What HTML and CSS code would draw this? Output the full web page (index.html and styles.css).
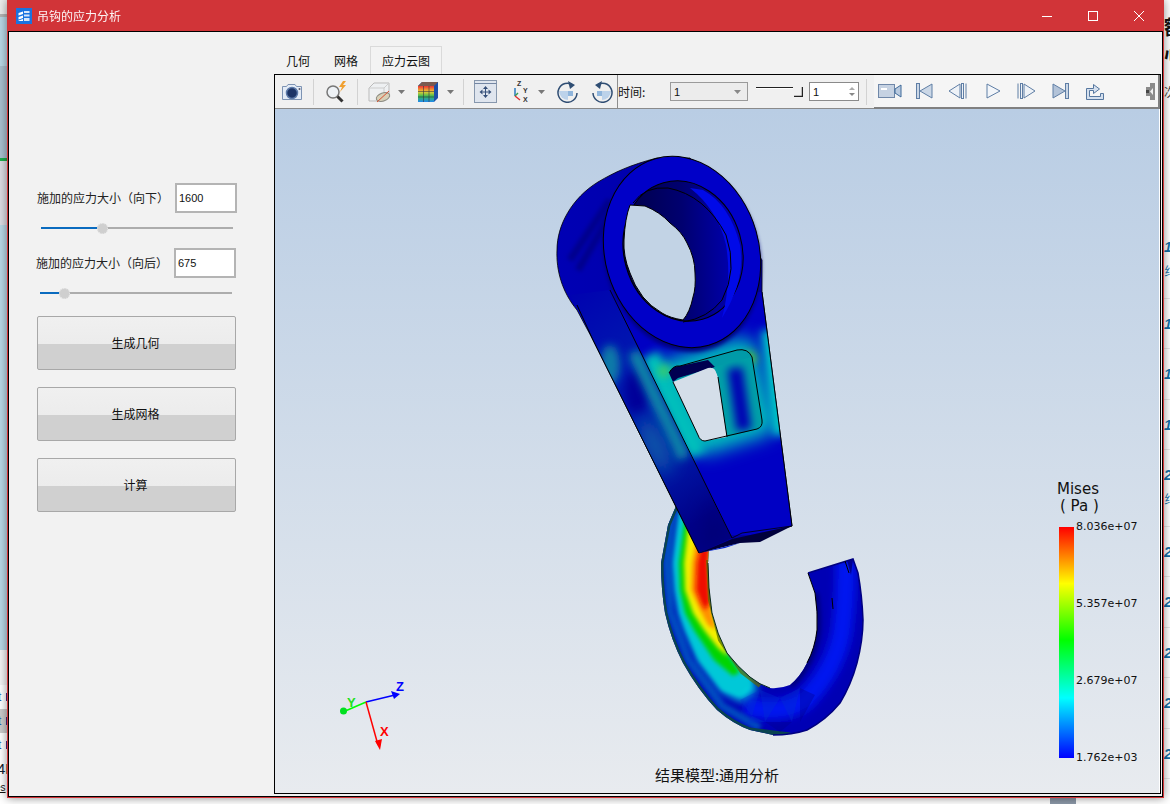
FILE: index.html
```html
<!DOCTYPE html>
<html lang="zh">
<head>
<meta charset="utf-8">
<title>吊钩的应力分析</title>
<link rel="stylesheet" href="styles.css">
</head>
<body>
<div class="desktop">
  <div class="desk-left">
    <div class="dl a"></div><div class="dl b"></div><div class="dl c"></div><div class="dl d"></div><div class="dl e"></div><div class="dl f"></div><div class="dl g"></div><div class="dl h"></div>
    <div class="dl-list"><span>t</span><span class="sel">t</span><span>t</span><span class="big">4F</span><span class="und">es</span></div>
  </div>
  <div class="desk-right">
    <div class="dr-head"><span>额</span><span>心</span><span class="small">次</span></div>
    <div class="dr-row tall">1<i>纟</i></div><div class="dr-row">1</div><div class="dr-row">1</div><div class="dr-row">1</div>
    <div class="dr-row tall">2<i>纟</i></div><div class="dr-row">2</div><div class="dr-row">2</div><div class="dr-row">2</div><div class="dr-row">2</div><div class="dr-row">2</div>
  </div>
  <div class="desk-bottom"></div>

  <div class="window">
    <header class="titlebar">
      <svg class="app-icon" width="16" height="16" viewBox="0 0 16 16"><rect width="16" height="16" fill="#1a73e0"/><path d="M2.500 5 7 3.500v2.500L2.500 7.500zM2.500 9 7 7.500V10l-4.500 1.500zM2.500 12.500 7 11v2H2.500z" fill="#fff"/><path d="M8 3h5.500v2H8zM8 6.500h5.500v2H8zM8 10h5.500v3H8z" fill="#d6e6fa"/></svg>
      <span class="app-title">吊钩的应力分析</span>
      <div class="win-controls">
        <svg width="12" height="12" viewBox="0 0 12 12"><path d="M1 6.500h10" stroke="#fff"/></svg>
        <svg class="max" width="12" height="12" viewBox="0 0 12 12"><rect x="1.500" y="1.500" width="9" height="9" fill="none" stroke="#fff"/></svg>
        <svg class="close" width="12" height="12" viewBox="0 0 12 12"><path d="M1 1l10 10M11 1 1 11" stroke="#fff"/></svg>
      </div>
    </header>
    <div class="client">
      <aside class="side">
        <div class="field"><span class="field-label">施加的应力大小（向下）</span><div class="num-box">1600</div></div>
        <div class="slider"><div class="slider-fill" style="width:60px"></div><div class="slider-thumb" style="left:60px"></div></div>
        <div class="field field-b"><span class="field-label">施加的应力大小（向后）</span><div class="num-box">675</div></div>
        <div class="slider slider-b"><div class="slider-fill" style="width:23px"></div><div class="slider-thumb" style="left:23px"></div></div>
        <button class="action first">生成几何</button>
        <button class="action">生成网格</button>
        <button class="action">计算</button>
      </aside>
      <main class="main">
        <nav class="tabs"><span class="tab">几何</span><span class="tab">网格</span><span class="tab active">应力云图</span></nav>
        <section class="viewer">
          <div class="toolbar">
            <svg class="ml-6" width="22" height="18" viewBox="0 0 22 18"><path d="M1.500 3.500h4l1.500-2h7l1.500 2h5v13h-19z" fill="#e3ebf6" stroke="#7d93b3"/><circle cx="11" cy="10" r="5.500" fill="#1d3466" stroke="#5d7aa8" stroke-width="1.500"/><circle cx="18.500" cy="6" r="1" fill="#556"/></svg>
            <i class="sep ml-10"></i>
            <svg class="ml-11" width="23" height="23" viewBox="0 0 23 23"><circle cx="8" cy="12" r="6" fill="#eef2f6" stroke="#777" stroke-width="1.500"/><path d="M12.500 16.500l5 5" stroke="#333" stroke-width="3"/><path d="M18 1l-4 6h3l-2 5 6-7h-3l3-4z" fill="#f0a030"/></svg>
            <i class="sep ml-9"></i>
            <svg class="ml-10" width="24" height="22" viewBox="0 0 24 22"><path d="M1 7 6 2h15v13l-5 5H1z" fill="#eef0f2" stroke="#bbb"/><path d="M1 7h15v13M16 7l5-5" fill="none" stroke="#ccc"/><ellipse cx="15" cy="16" rx="7" ry="4" fill="#d8d0b8" stroke="#8a8a80" transform="rotate(-20 15 16)"/><path d="M9 21 21 10" stroke="#d85030"/></svg>
            <svg class="ml-6" width="7" height="4" viewBox="0 0 7 4"><path d="M0 0h7L3.500 4z" fill="#777"/></svg>
            <svg class="ml-12" width="21" height="22" viewBox="0 0 21 22"><defs><linearGradient id="cb" x1="0" y1="0" x2="0" y2="1"><stop offset="0" stop-color="#e33"/><stop offset=".35" stop-color="#ec3"/><stop offset=".65" stop-color="#3b5"/><stop offset="1" stop-color="#28e"/></linearGradient></defs><path d="M1 5 5 1h16v16l-4 4H1z" fill="#1c4fa8"/><rect x="1" y="5" width="16" height="16" fill="url(#cb)"/><path d="M1 5 5 1h16l-4 4z" fill="#7a5a50"/><path d="M6.500 5v16M12 5v16M1 10.500h16M1 16h16" stroke="#334" stroke-width=".6"/></svg>
            <svg class="ml-9" width="7" height="4" viewBox="0 0 7 4"><path d="M0 0h7L3.500 4z" fill="#777"/></svg>
            <i class="sep ml-9"></i>
            <svg class="ml-10" width="23" height="23" viewBox="0 0 23 23"><rect x=".5" y=".5" width="22" height="22" fill="#dfe5ee" stroke="#8797ad"/><path d="M.5 3.500h22" stroke="#7386a3"/><path d="M11.500 9v6M8.500 12h6" stroke="#36507a"/><path d="M11.500 6 9 9h5zM11.500 18 9 15h5zM5.500 12l3-2.500v5zM17.500 12l-3-2.500v5z" fill="#36507a"/></svg>
            <svg class="ml-15" width="18" height="22" viewBox="0 0 18 22"><path d="M3 15V7" stroke="#2a7ac0" stroke-width="1.500"/><path d="M3 15l3-3" stroke="#3a9a50" stroke-width="1.500"/><path d="M3 15l5 4" stroke="#e03030" stroke-width="1.500"/><text class="ax" x="5" y="5">Z</text><text class="ax" x="11" y="12">Y</text><text class="ax" x="11" y="21">X</text></svg>
            <svg class="ml-8" width="7" height="4" viewBox="0 0 7 4"><path d="M0 0h7L3.500 4z" fill="#777"/></svg>
            <svg class="ml-12" width="21" height="22" viewBox="0 0 21 22"><path d="M16 4A9.500 9.500 0 1 0 20 12" fill="none" stroke="#2f4d73" stroke-width="1.500"/><path d="M11 0l7 4-5 4z" fill="#2f4d73"/><path d="M2 10h9v9A9 9 0 0 1 2 10z" fill="#bcd2ea"/><path d="M11 10h5v5h-5z" fill="#8fb5dc"/></svg>
            <svg class="ml-14" width="21" height="22" viewBox="0 0 21 22"><path d="M5 4A9.500 9.500 0 1 1 1 12" fill="none" stroke="#2f4d73" stroke-width="1.500"/><path d="M10 0 3 4l5 4z" fill="#2f4d73"/><path d="M19 10h-9v9a9 9 0 0 0 9-9z" fill="#bcd2ea"/><path d="M10 10H5v5h5z" fill="#8fb5dc"/></svg>
            <i class="sep dark ml-4"></i>
            <span class="time-label">时间:</span>
            <div class="combo ml-22"><span>1</span><svg width="7" height="4" viewBox="0 0 7 4"><path d="M0 0h7L3.500 4z" fill="#888"/></svg></div>
            <svg class="ml-8" width="47" height="10" viewBox="0 0 47 10"><path d="M0 .5h37" stroke="#222"/><path d="M0 1.500h37" stroke="#fff"/><path d="M46.500 0v9.500H38" fill="none" stroke="#222" stroke-width="1.500"/></svg>
            <div class="spin ml-6"><span>1</span><div class="spin-arrows"><b></b><b class="down"></b></div></div>
            <i class="sep ml-7"></i>
            <div class="player ml-7">
              <svg class="ml-4" width="24" height="14" viewBox="0 0 24 14"><rect x=".5" y=".5" width="16" height="13" fill="#c6d2e2" stroke="#6f87a8"/><rect x="3" y="4" width="6" height="2" fill="#fff"/><path d="M17 5l6-4v12l-6-4z" fill="#b9cadf" stroke="#3f6a9a"/></svg>
              <svg class="ml-14" width="17" height="16" viewBox="0 0 17 16"><rect x=".5" y=".5" width="3" height="15" fill="#cbd7e6" stroke="#5f7ea5"/><path d="M16 1v14L4 8z" fill="#cbd7e6" stroke="#5f7ea5"/></svg>
              <svg class="ml-15" width="19" height="16" viewBox="0 0 19 16"><path d="M12 1v14L1 8z" fill="#eef2f7" stroke="#5f7ea5"/><rect x="13.500" y=".5" width="2" height="15" fill="#eef2f7" stroke="#5f7ea5"/><path d="M18 .5v15" stroke="#5f7ea5"/></svg>
              <svg class="ml-19" width="15" height="16" viewBox="0 0 15 16"><path d="M1 1v14l13-7z" fill="#f3f6fa" stroke="#5f7ea5"/></svg>
              <svg class="ml-16" width="19" height="16" viewBox="0 0 19 16"><path d="M7 1v14l11-7z" fill="#eef2f7" stroke="#5f7ea5"/><rect x="3.500" y=".5" width="2" height="15" fill="#eef2f7" stroke="#5f7ea5"/><path d="M1 .5v15" stroke="#5f7ea5"/></svg>
              <svg class="ml-16" width="17" height="16" viewBox="0 0 17 16"><path d="M1 1v14l12-7z" fill="#b3c3d8" stroke="#5f7ea5"/><rect x="13.500" y=".5" width="3" height="15" fill="#cbd7e6" stroke="#5f7ea5"/></svg>
              <svg class="ml-16" width="19" height="18" viewBox="0 0 19 18"><path d="M1.500 6.500h7v-4l6 4.500-6 4.500v-3h-4v6h11v-3h3v6h-17z" fill="#d5e0ee" stroke="#56779f"/></svg>
              <svg class="ml-42" width="9" height="17" viewBox="0 0 9 17"><path d="M0 4h4V0h5v17H4v-4H0z" fill="#8a8a8a"/><path d="M4 8.500 7 5v7z" fill="#f0f0f0"/><path d="M0 7h3v3H0z" fill="#444"/></svg>
            </div>
          </div>
          <div class="canvas">
            <svg class="scene" width="884" height="684" viewBox="275 109 884 684">
              <defs>
                <linearGradient id="bg" x1="0" y1="0" x2="0" y2="1"><stop offset="0" stop-color="#b9cde4"/><stop offset="1" stop-color="#e8ebef"/></linearGradient>
                <linearGradient id="bar" x1="0" y1="0" x2="0" y2="1"><stop offset="0" stop-color="#f00"/><stop offset=".245" stop-color="#ff0"/><stop offset=".49" stop-color="#0f0"/><stop offset=".74" stop-color="#0ff"/><stop offset="1" stop-color="#00f"/></linearGradient>
                <linearGradient id="back" x1="0" y1="0" x2="1" y2="0"><stop offset="0" stop-color="#0000b4"/><stop offset="1" stop-color="#0000a0"/></linearGradient>
                <linearGradient id="bore" x1="0" y1="0" x2="1" y2=".3"><stop offset="0" stop-color="#00003c"/><stop offset=".6" stop-color="#000070"/><stop offset="1" stop-color="#0000b0"/></linearGradient>
                <linearGradient id="sideg" x1="0" y1="0" x2=".4" y2="1"><stop offset="0" stop-color="#0000b0"/><stop offset=".35" stop-color="#0018b0"/><stop offset=".75" stop-color="#0018a8"/><stop offset="1" stop-color="#000088"/></linearGradient>
                <filter id="b2" filterUnits="userSpaceOnUse" x="275" y="109" width="884" height="684"><feGaussianBlur stdDeviation="2.200"/></filter>
                <filter id="b4" filterUnits="userSpaceOnUse" x="275" y="109" width="884" height="684"><feGaussianBlur stdDeviation="4"/></filter>
                <filter id="b8" filterUnits="userSpaceOnUse" x="275" y="109" width="884" height="684"><feGaussianBlur stdDeviation="9"/></filter>
                <clipPath id="hookclip"><path d="M676 506 668 525 661 563Q661 590 665 613 671 640 683 663 698 690 717 710 733 724 750 730L773 735Q792 735 807 730 826 720 840 703 851 685 857 663 863 640 863 620 862 595 858 573L853 559 808 573 815 593Q818 612 817 630 815 648 807 663 800 677 790 685 780 689 770 688 760 685 750 677 737 666 727 653 717 634 712 613 708 588 708 563L710 530z"/></clipPath>
                <clipPath id="sideclip"><path d="M570 295 610 290 732 538 699 553 593 340z"/></clipPath>
                <clipPath id="frontclip"><path d="M610 290 762 292 792 526 732 539z"/></clipPath>
                <clipPath id="wallclip"><path d="M714 367 752 357 762 423 757 429 727 437 718 377z"/></clipPath>
              </defs>
              <rect x="275" y="109" width="884" height="684" fill="url(#bg)"/>

              <g clip-path="url(#hookclip)">
                <rect x="650" y="500" width="220" height="245" fill="#0000b4"/>
                <path d="M846 560Q846 600 842 630 836 668 805 700 780 716 745 706" fill="none" stroke="#0016f0" stroke-width="20" filter="url(#b4)"/>
                <path d="M815 593Q818 612 817 630 815 648 807 663 800 677 790 685" fill="none" stroke="#00007a" stroke-width="7" filter="url(#b2)"/>
                <path d="M672 510 666 563 670 613 688 660 722 706 760 728" fill="none" stroke="#0048c0" stroke-width="8" filter="url(#b2)"/>
                <path d="M680 510 673 563 675 590 679 613 685 630 698 660 722 692 742 702 758 690 750 677 727 653 712 613 708 563 710 510z" fill="#00d4e0" filter="url(#b4)"/>
                <path d="M680 510 674 563 676 590 680 613 686 630 699 660 722 690 740 696 752 684 750 677 727 653 712 613 708 563 710 510z" fill="#00c8d8" filter="url(#b2)"/>
                <path d="M686 510 679 563 680 590 685 613 694 630 714 660 733 676 740 672 727 653 712 613 708 563 710 510z" fill="#00d400" filter="url(#b2)"/>
                <path d="M690 510 684 563 685 590 693 613 704 630 718 648 727 656 727 653 712 613 708 563 710 510z" fill="#f4f000" filter="url(#b2)"/>
                <path d="M698 530 692 563 691 590 700 610 708 625 716 630 712 613 708 563 710 530z" fill="#ff9000" filter="url(#b2)"/>
                <path d="M702 540 697 563 696 590 701 603 705 610 710 603 708 563 710 540z" fill="#ee1000" filter="url(#b2)"/>
                <path d="M708 560 710 600 720 640 742 672 760 686" fill="none" stroke="#5a6a00" stroke-width="4" opacity=".7"/>
                <path d="M676 506 668 525 661 563Q661 590 665 613 671 640 683 663 698 690 717 710 733 724 750 730L790 735" fill="none" stroke="#0a4450" stroke-width="5"/>
                <path d="M740 700 760 690 752 716zM760 690 780 698 765 722zM780 698 800 688 792 722zM752 716 765 722 745 724z" fill="#0030d0" opacity=".35"/>
                <path d="M765 722 792 722 780 732zM800 688 815 695 800 722z" fill="#00008a" opacity=".35"/>
                <path d="M846 556 851 575 853 559z" fill="#000090"/>
              </g>
              <path d="M808 573 853 559 858 573Q862 595 863 620 863 640 857 663 851 685 840 703 826 720 807 730 792 735 773 735" fill="none" stroke="#000080" stroke-width="1.500"/>
              <path d="M808 573 815 593Q818 612 817 630 815 648 807 663" fill="none" stroke="#000" stroke-width="1"/>
              <path d="M845 561 849 573M832 598 833 609" fill="none" stroke="#000" stroke-width="1"/>
              <path d="M708 563Q708 588 712 613 717 634 727 653 737 666 750 677 760 685 770 688" fill="none" stroke="#0a2a20" stroke-width="1"/>

              <path d="M657 158C630 165 615 172 598 182 572 198 557 225 557 250 556 270 562 292 577 310L593 340 699 553 792 526 762 292 762 260 690 158z" fill="url(#back)" stroke="#000" stroke-width=".8"/>
              <path d="M610 200 570 260M625 190 578 270" stroke="#00008c" stroke-width="7" fill="none" filter="url(#b2)"/>

              <g clip-path="url(#sideclip)">
                <rect x="570" y="285" width="170" height="275" fill="url(#sideg)"/>
                <ellipse cx="610" cy="365" rx="10" ry="20" fill="#0a7aa8" filter="url(#b4)"/>
                <ellipse cx="637" cy="392" rx="12" ry="22" fill="#00009a" filter="url(#b4)"/>
                <path d="M634 352 684 458" stroke="#0a88a8" stroke-width="13" fill="none" filter="url(#b4)"/>
                <ellipse cx="655" cy="445" rx="10" ry="30" fill="#0a60a8" filter="url(#b8)" transform="rotate(-25 655 445)"/>
                <path d="M695 555 710 500 735 540z" fill="#000078" filter="url(#b8)"/>
              </g>
              <g clip-path="url(#frontclip)">
                <rect x="600" y="285" width="200" height="250" fill="#0000c4"/>
                <path d="M669 373 743 351 762 423 705 441 698 435z" fill="none" stroke="#00c4bc" stroke-width="26" stroke-linejoin="round" filter="url(#b8)"/>
                <path d="M768 330 780 435" stroke="#00c8c4" stroke-width="14" filter="url(#b4)" fill="none"/>
                <path d="M650 355 698 455" stroke="#00c0bc" stroke-width="18" filter="url(#b4)" fill="none"/>
                <circle cx="664" cy="371" r="6" fill="#40d060" filter="url(#b4)"/>
                <circle cx="750" cy="358" r="6" fill="#60c020" filter="url(#b4)"/>
              </g>
              <path d="M669 373Q673 365 680 366L737 350Q748 348 752 357L762 420Q763 427 757 429L705 441Q700 441 698 435L673 382z" fill="#009aa8"/>
              <path d="M669 373Q673 365 680 366L708 360 715 367 678 378 673 382z" fill="#000050"/>
              <path d="M673 382 708 368Q716 366 718 377L727 437 705 441Q700 441 698 435z" fill="#d4dee9"/>
              <g clip-path="url(#wallclip)">
                <rect x="710" y="350" width="55" height="95" fill="#00a0a8"/>
                <path d="M735 368 744 430" stroke="#0000b4" stroke-width="15" filter="url(#b4)" fill="none"/>
              </g>
              <path d="M669 373Q673 365 680 366L737 350Q748 348 752 357L762 420Q763 427 757 429L705 441Q700 441 698 435L673 382" fill="none" stroke="#000" stroke-width="1"/>
              <path d="M718 377 727 437" stroke="#000" stroke-width="1"/>
              <path d="M610 290 732 538M762 292 792 526M593 340 699 553M577 305 593 340" fill="none" stroke="#000" stroke-width="1"/>
              <path d="M699 553 732 539 792 526 760 542 740 543z" fill="#00003c"/>
              <path d="M699 553 740 543 725 548z" fill="#0020d0"/>
              <path d="M732 538 742 533 792 526" fill="none" stroke="#000" stroke-width=".8"/>

              <ellipse cx="682" cy="256" rx="77" ry="97" transform="rotate(-16 682 256)" fill="#00007c" filter="url(#b2)"/>
              <ellipse cx="682" cy="252" rx="77" ry="97" transform="rotate(-16 682 252)" fill="#0000c8" stroke="#000" stroke-width="1"/>
              <ellipse cx="683" cy="251" rx="59" ry="71" transform="rotate(-16 683 251)" fill="url(#bore)" stroke="#000" stroke-width="1"/>
              <path d="M703 190Q730 205 740 245 746 280 722 318 732 280 726 245 718 210 690 188z" fill="#000ae8"/>
              <path d="M633 203Q645 186 668 188 705 195 726 235 738 270 722 300 708 318 683 322" fill="none" stroke="#000" stroke-width="1"/>
              <path d="M630 205 645 206Q660 212 670 223 682 232 687 243 695 258 695 273 696 288 693 297 690 312 683 320 670 318 662 313 650 306 643 297 634 285 630 273 623 256 624 240 625 218 630 205z" fill="#c2d3e5" stroke="#000" stroke-width="1"/>

              <text class="leg-title" x="1057" y="494">Mises</text>
              <text class="leg-unit" x="1060" y="511">( Pa )</text>
              <rect x="1059" y="527" width="15" height="231" fill="url(#bar)"/>
              <text class="leg-val" x="1076" y="530">8.036e+07</text>
              <text class="leg-val" x="1076" y="607">5.357e+07</text>
              <text class="leg-val" x="1076" y="684">2.679e+07</text>
              <text class="leg-val" x="1076" y="761">1.762e+03</text>
              <text class="model-name" x="717" y="781" text-anchor="middle">结果模型:通用分析</text>

              <path d="M366 702 395 695" stroke="#0000ff" stroke-width="1.500"/>
              <path d="M366 702 343 712" stroke="#00ff00" stroke-width="1.500"/>
              <path d="M366 702 378 745" stroke="#ff0000" stroke-width="1.500"/>
              <path d="M391 691 400 694 394 699z" fill="#0000ff"/>
              <circle cx="343.500" cy="711" r="3.500" fill="#00e020"/>
              <path d="M375 741 382 739 380 750z" fill="#ff0000"/>
              <text class="ax3 z" x="396" y="691">Z</text>
              <text class="ax3 y" x="347" y="707">Y</text>
              <text class="ax3 x" x="380" y="736">X</text>
            </svg>
          </div>
        </section>
      </main>
    </div>
  </div>
</div>
</body>
</html>
```
FILE: styles.css
```css
* { box-sizing: border-box; }
html, body { margin: 0; padding: 0; }
body { font-family: "Noto Sans CJK SC", "Liberation Sans", sans-serif; font-size: 12px; color: #111; }
svg { display: block; flex: none; }

.desktop { position: relative; width: 1170px; height: 804px; overflow: hidden; background: #fff; }
.desk-left { position: absolute; left: 0; top: 0; width: 8px; height: 804px; overflow: hidden; }
.dl.a { height: 14px; background: #ececec; }
.dl.b { height: 3px; background: #b4b4b4; }
.dl.c { height: 49px; background: #b9d8e6; }
.dl.d { height: 92px; background: #a9c0cf; }
.dl.e { height: 3px; background: #1fae4c; }
.dl.f { height: 64px; background: #dcdce2; }
.dl.g { height: 425px; background: #b9d8e6; }
.dl.h { height: 35px; background: #f4f4f4; }
.dl-list { display: flex; flex-direction: column; color: #1a5fb0; font-family: "Liberation Sans", sans-serif; font-size: 12px; }
.dl-list span { height: 24px; line-height: 24px; text-align: left; margin-left: -2px; position: relative; }
.dl-list span::after { content: ""; position: absolute; left: 8px; top: 8px; width: 2px; height: 8px; background: #4a2a80; }
.dl-list .sel { background: #ccc; }
.dl-list .big { font-size: 15px; color: #123; margin-left: -3px; }
.dl-list .und { height: 14px; line-height: 14px; color: #111; text-decoration: underline; margin-left: -5px; font-size: 10px; }
.dl-list .big::after, .dl-list .und::after { display: none; }

.desk-right { position: absolute; left: 1164px; top: 0; width: 6px; height: 804px; overflow: hidden; white-space: nowrap; }
.dr-head { display: flex; flex-direction: column; height: 222px; padding-top: 14px; font-size: 20px; font-weight: 700; line-height: 26px; }
.dr-head .small { font-size: 12px; font-weight: 400; line-height: 20px; margin-top: 16px; color: #444; }
.dr-row { height: 50.500px; padding-top: 16px; line-height: 18px; font-family: "Liberation Sans", sans-serif; font-size: 14px; font-weight: 700; font-style: italic; color: #1470a8; border-bottom: 1px solid #e6e6e6; }
.dr-row.tall { height: 76.500px; }
.dr-row i { display: block; margin-top: 6px; font-style: normal; font-weight: 400; font-size: 12px; }
.desk-bottom { position: absolute; left: 1050px; top: 797px; width: 26px; height: 7px; background: #8c98a8; }

.window { position: absolute; left: 7px; top: 0; width: 1157px; height: 798px; display: flex; flex-direction: column; background: #d13438; padding: 0 1px 1px; box-shadow: 0 0 9px rgba(0, 0, 0, .45); }
.titlebar { height: 31px; margin: 0 -1px; flex: none; display: flex; align-items: center; background: #d13438; color: #fff; padding-left: 9px; }
.app-icon { margin-right: 5px; }
.app-title { font-size: 12px; line-height: 31px; color: #fff; opacity: .95; }
.win-controls { margin-left: auto; display: flex; gap: 34px; padding-right: 19px; }

.client { flex: 1; display: flex; background: #f2f2f2; border: 1px solid #000; min-height: 0; }
.side { width: 265px; flex: none; padding: 151px 0 0 28px; display: flex; flex-direction: column; align-items: flex-start; }
.field { display: flex; align-items: center; height: 30px; }
.field-b { margin: 11px 0 0 -1px; }
.field-label { width: 138px; font-size: 12px; line-height: 30px; color: #222; }
.num-box { width: 62px; height: 30px; border: 2px solid #b4b4b4; background: #fff; padding-left: 2px; font-family: "Liberation Sans", sans-serif; font-size: 11px; line-height: 26px; }
.slider { position: relative; width: 192px; height: 18px; margin: 6px 0 0 4px; flex: none; }
.slider::before { content: ""; display: block; position: absolute; left: 0; right: 0; top: 8px; height: 2px; background: #adadad; }
.slider-b { margin-left: 3px; }
.slider-fill { position: absolute; left: 0; top: 8px; height: 2px; background: #0a6bbf; }
.slider-thumb { position: absolute; top: 4px; width: 11px; height: 11px; margin-left: -4px; border-radius: 50%; background: #cfcfcf; border: 1px dotted #e8e8e8; }
.action { display: block; width: 199px; height: 54px; margin: 17px 0 0; padding: 0 2px 2px 0; flex: none; border: 1px solid #a8a8a8; border-radius: 2px; background: linear-gradient(#f0f0f0 0, #ececec 51%, #d0d0d0 51%, #d0d0d0 100%); font-family: inherit; font-size: 12px; color: #111; }
.action.first { margin-top: 14px; }

.main { flex: 1; min-width: 0; display: flex; flex-direction: column; padding: 0 1px 2px 0; }
.tabs { height: 42px; flex: none; display: flex; align-items: flex-end; }
.tab { width: 48px; height: 28px; line-height: 30px; text-align: center; font-size: 12px; color: #111; }
.tab.active { width: 72px; background: #f3f3f3; border: 1px solid #dadada; border-bottom: 0; line-height: 28px; }
.viewer { flex: 1; min-height: 0; display: flex; flex-direction: column; border: 1px solid #000; background: #fff; }

.toolbar { height: 34px; flex: none; display: flex; align-items: center; background: #f0f0f0; border-bottom: 1px solid #8a8a8a; }
.sep { display: block; width: 1px; height: 26px; background: #d2d2d2; flex: none; }
.sep.dark { height: 33px; background: #8d8d8d; }
.time-label { width: 30px; flex: none; font-size: 12px; line-height: 18px; }
.combo { width: 78px; height: 19px; flex: none; display: flex; align-items: center; justify-content: space-between; padding: 0 6px 0 3px; border: 1px solid #9a9a9a; background: #ececec; font-family: "Liberation Sans", sans-serif; font-size: 11px; }
.spin { width: 50px; height: 19px; flex: none; display: flex; align-items: center; justify-content: space-between; padding: 0 3px; border: 1px solid #8a8a8a; background: #fff; font-family: "Liberation Sans", sans-serif; font-size: 11px; }
.spin-arrows { display: flex; flex-direction: column; gap: 3px; }
.spin-arrows b { display: block; width: 0; height: 0; border: 3px solid transparent; border-top: 0; border-bottom: 3px solid #aaa; }
.spin-arrows b.down { border-bottom: 0; border-top: 3px solid #888; }
.player { align-self: stretch; flex: 1; display: flex; align-items: center; background: #f5f5f5; border-right: 2px solid #808080; margin-bottom: -1px; border-bottom: 2px solid #808080; }
.ax { font-family: "Liberation Sans", sans-serif; font-size: 7px; font-weight: 700; fill: #333; }

.ml-4 { margin-left: 4px; } .ml-6 { margin-left: 6px; } .ml-7 { margin-left: 7px; } .ml-8 { margin-left: 8px; }
.ml-9 { margin-left: 9px; } .ml-10 { margin-left: 10px; } .ml-11 { margin-left: 11px; } .ml-12 { margin-left: 12px; }
.ml-14 { margin-left: 14px; } .ml-15 { margin-left: 15px; } .ml-16 { margin-left: 16px; } .ml-19 { margin-left: 19px; }
.ml-22 { margin-left: 22px; } .ml-42 { margin-left: 42px; }

.canvas { flex: 1; min-height: 0; overflow: hidden; }
.scene text { font-family: "DejaVu Sans", sans-serif; fill: #111; }
.scene .leg-title { font-size: 15px; }
.scene .leg-unit { font-size: 15px; }
.scene .leg-val { font-size: 11px; }
.scene .model-name { font-family: "Noto Sans CJK SC", sans-serif; font-size: 15px; }
.scene .ax3 { font-family: "Liberation Sans", sans-serif; font-size: 13px; font-weight: 700; }
.scene .ax3.z { fill: #0000ff; }
.scene .ax3.y { fill: #20e020; }
.scene .ax3.x { fill: #ff0000; }
```
